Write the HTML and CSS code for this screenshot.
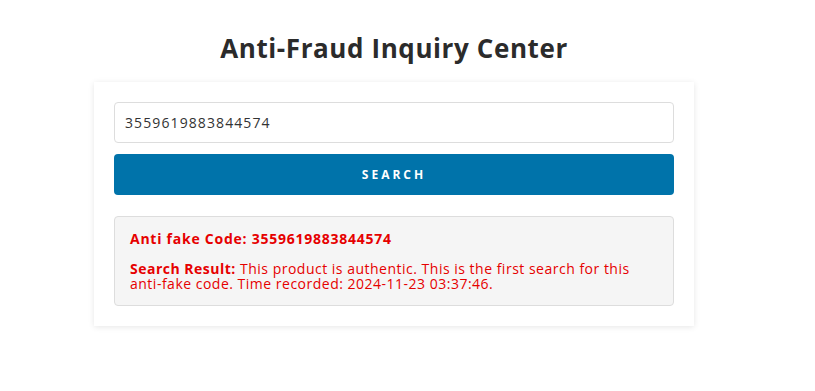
FILE: index.html
```html
<!DOCTYPE html>
<html>
<head>
<meta charset="utf-8">
<link rel="stylesheet" href="styles.css">
</head>
<body>
<div class="page">
  <h1 class="title">Anti-Fraud Inquiry Center</h1>
  <div class="card">
    <div class="input">3559619883844574</div>
    <div class="button">SEARCH</div>
    <div class="result">
      <p class="code">Anti fake Code: 3559619883844574</p>
      <p class="msg"><b>Search Result:</b> This product is authentic. This is the first search for this anti-fake code. Time recorded: 2024-11-23 03:37:46.</p>
    </div>
  </div>
</div>
</body>
</html>
```
FILE: styles.css
```css
html, body { margin: 0; padding: 0; background: #fff; }
body { font-family: "Open Sans", "Liberation Sans", sans-serif; color: #333; }
.page { width: 600px; margin-left: 94px; padding-top: 32px; padding-bottom: 20px; }
.title { margin: 0 0 18px; font-size: 26px; line-height: 32px; font-weight: 700; text-align: center; color: #2b2b2b; letter-spacing: 0.6px; }
.card { background: #fff; padding: 20px; box-shadow: 0 1px 6px rgba(0,0,0,0.1); display: flex; flex-direction: column; }
.input { height: 39px; border: 1px solid #ddd; border-radius: 4px; padding: 0 10px; font-size: 14px; line-height: 39px; color: #333; letter-spacing: 1.1px; }
.button { margin-top: 11px; height: 41px; background: #0073aa; border-radius: 4px; color: #fff; font-size: 12px; font-weight: 700; letter-spacing: 3px; text-align: center; line-height: 41px; }
.result { margin-top: 21px; background: #f5f5f5; border: 1px solid #ddd; border-radius: 4px; padding: 14px 15px 14px; color: #e60000; font-size: 14px; }
.code { margin: 0; font-weight: 700; line-height: 16px; letter-spacing: 0.75px; }
.msg { margin: 14px 0 0; line-height: 15px; letter-spacing: 0.5px; }
```
